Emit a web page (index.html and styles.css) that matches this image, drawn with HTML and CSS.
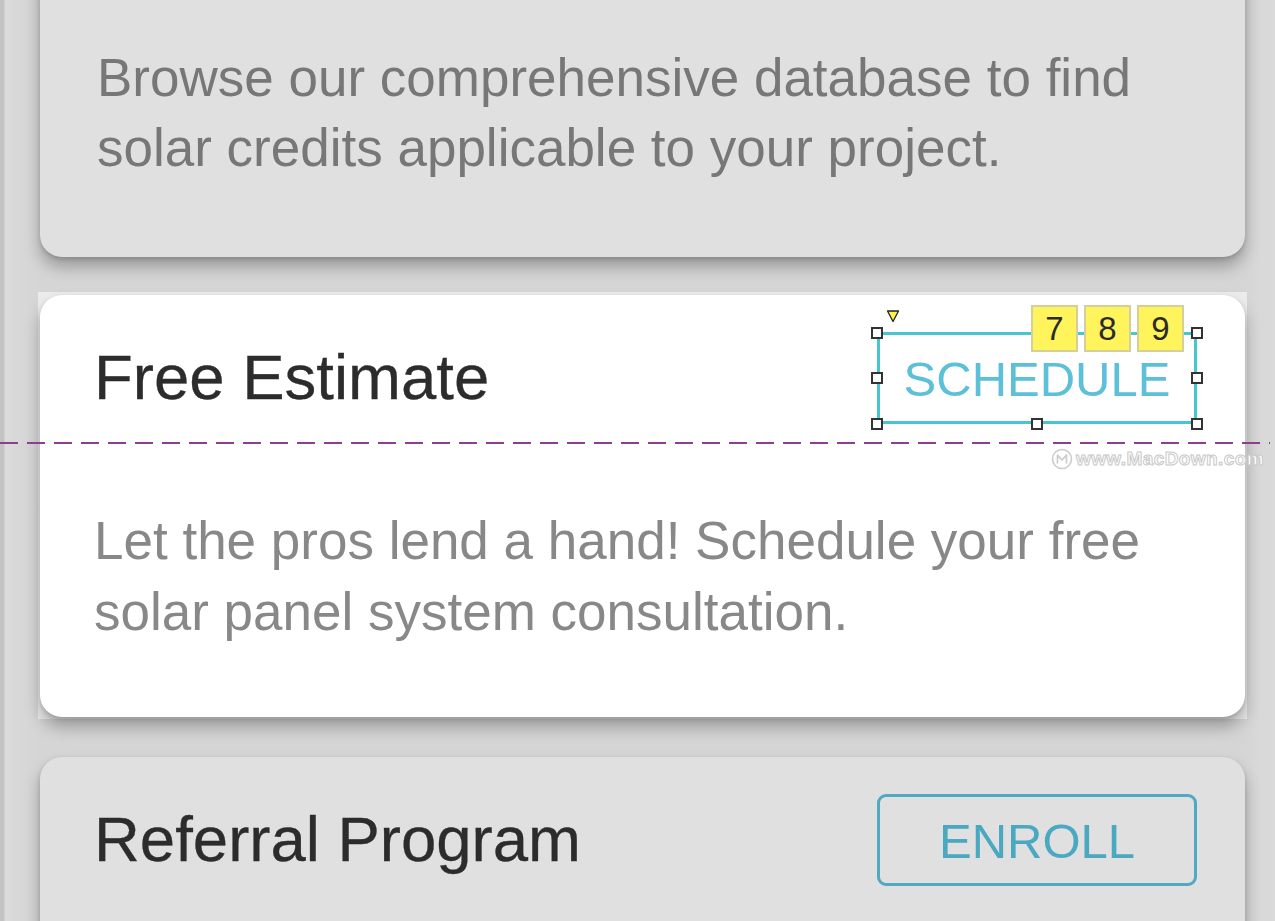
FILE: index.html
```html
<!DOCTYPE html>
<html>
<head>
<meta charset="utf-8">
<link rel="stylesheet" href="styles.css">
</head>
<body>
<div class="page">
  <div class="card card-gray card-first">
    <p class="body-text dim">Browse our comprehensive database to find solar credits applicable to your project.</p>
  </div>

  <div class="selected">
    <div class="card card-white">
      <div class="card-head">
        <h2 class="title">Free Estimate</h2>
        <div class="btn btn-selected">
          <span class="btn-label btn-label-light">SCHEDULE</span>
          <span class="handle h-tl"></span>
          <span class="handle h-tr"></span>
          <span class="handle h-ml"></span>
          <span class="handle h-mr"></span>
          <span class="handle h-bl"></span>
          <span class="handle h-bm"></span>
          <span class="handle h-br"></span>
          <span class="marker">
            <svg width="14" height="14" viewBox="0 0 14 14"><polygon points="1.5,2 12.5,2 7,12.5" fill="#fff04a" stroke="#222" stroke-width="1.3" stroke-linejoin="round"/></svg>
          </span>
          <div class="badges">
            <span class="badge">7</span>
            <span class="badge">8</span>
            <span class="badge">9</span>
          </div>
        </div>
      </div>
      <p class="body-text light">Let the pros lend a hand! Schedule your free solar panel system consultation.</p>
    </div>
  </div>

  <div class="card card-gray card-last">
    <div class="card-head">
      <h2 class="title">Referral Program</h2>
      <div class="btn btn-outline"><span class="btn-label">ENROLL</span></div>
    </div>
  </div>

  <div class="guide"></div>
  <div class="watermark">
    <svg class="wm-logo" width="22" height="22" viewBox="0 0 22 22"><circle cx="11" cy="11" r="9.5" fill="#fff" stroke="#cdcdcd" stroke-width="1.6"/><path d="M6.5 15.5 V7 L11 12 L15.5 7 V15.5" fill="none" stroke="#cdcdcd" stroke-width="1.7" stroke-linejoin="round"/></svg>
    <span class="wm-text">www.MacDown.com</span>
  </div>
</div>
</body>
</html>
```

FILE: styles.css
```css
* { box-sizing: border-box; }
html, body { margin: 0; padding: 0; }
body {
  width: 1275px;
  height: 921px;
  overflow: hidden;
  font-family: "Liberation Sans", Arial, sans-serif;
  background: linear-gradient(to right, #c3c3c3 0, #c3c3c3 4px, #dcdcdc 5px, #d8d8d8 16px, #d5d5d5 40px, #d5d5d5 1245px, #d9d9d9 1262px, #dadada 100%);
}
.page {
  position: relative;
  padding: 0 30px 0 40px;
  display: flex;
  flex-direction: column;
}
.card {
  border-radius: 22px;
  box-shadow: 0 10px 16px rgba(0,0,0,0.28), 0 2px 4px rgba(0,0,0,0.14);
}
.card-gray { background: #e0e0e0; }
.card-white { background: #ffffff; padding: 37px 48px 70px 54px; }
.card-first {
  margin-top: -40px;
  padding: 83px 48px 74px 57px;
}
.selected {
  margin: 35px -2px 0 -2px;
  padding: 3px 2px 2px 2px;
  background: #ececec;
}
.card-last {
  margin-top: 38px;
  padding: 37px 48px 80px 54px;
  height: 300px;
}
.card-head {
  display: flex;
  align-items: center;
  justify-content: space-between;
  height: 92px;
}
.title {
  margin: 0;
  font-size: 63.5px;
  font-weight: normal;
  color: #2c2c2c;
  line-height: 1;
  -webkit-text-stroke: 0.3px #2c2c2c;
}
.body-text {
  margin: 0;
  font-size: 53px;
  line-height: 70px;
}
.card-white .body-text { margin-top: 81px; line-height: 71px; }
.dim { color: #777777; }
.light { color: #888888; }
.btn {
  position: relative;
  width: 320px;
  height: 92px;
  display: flex;
  align-items: center;
  justify-content: center;
}
.btn-outline {
  border: 3px solid #4fa9c0;
  border-radius: 9px;
}
.btn-selected {
  border: 3px solid #45c6d0;
}
.btn-label {
  font-size: 49px;
  color: #4aa8c1;
  line-height: 1;
  padding-top: 2px;
}
.btn-label-light { color: #5cc0d8; }
.handle {
  position: absolute;
  width: 12px;
  height: 12px;
  background: #fff;
  border: 2px solid #333;
}
.h-tl { left: -9px; top: -8px; }
.h-tr { right: -9px; top: -8px; }
.h-ml { left: -9px; top: 37px; }
.h-mr { right: -9px; top: 37px; }
.h-bl { left: -9px; bottom: -9px; }
.h-bm { left: 151px; bottom: -9px; }
.h-br { right: -9px; bottom: -9px; }
.marker {
  position: absolute;
  left: 6px;
  top: -26px;
  width: 14px;
  height: 14px;
  display: block;
}
.marker svg { display: block; }
.badges {
  position: absolute;
  left: 151px;
  top: -30px;
  display: flex;
  gap: 6px;
}
.badge {
  width: 47px;
  height: 47px;
  background: #fff45c;
  border: 2px solid #d6cf9c;
  display: flex;
  align-items: center;
  justify-content: center;
  font-size: 33px;
  color: #2b2b2b;
}
.guide {
  position: absolute;
  left: 0;
  top: 442px;
  width: 1270px;
  height: 2px;
  background: repeating-linear-gradient(to right, #8c3f8c 0, #8c3f8c 18px, transparent 18px, transparent 27px);
}
.watermark {
  position: absolute;
  left: 1051px;
  top: 448px;
  display: flex;
  align-items: center;
  gap: 3px;
}
.wm-logo { display: block; }
.wm-text {
  font-size: 19px;
  font-weight: bold;
  letter-spacing: 0.4px;
  color: #ffffff;
  -webkit-text-stroke: 1px #c9c9c9;
}
```
